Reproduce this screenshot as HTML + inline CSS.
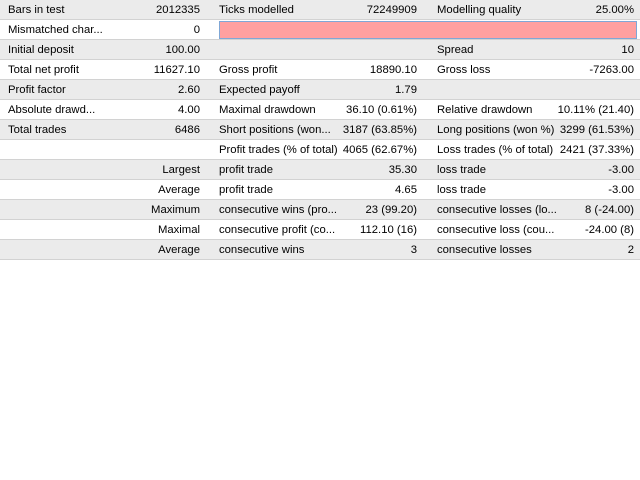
<!DOCTYPE html>
<html><head><style>
body{margin:0;width:640px;height:480px;background:#fff;font-family:"Liberation Sans",sans-serif;font-size:11.3px;color:#000;overflow:hidden;position:relative}
.r{position:absolute;left:0;width:640px;height:19px;border-bottom:1px solid #d2d2d2}
.g{background:#ebebeb}
.r span{position:absolute;top:4px;white-space:nowrap}
.l1{left:8px}.v1{right:440px}.l2{left:219px}.v2{right:223px}.l3{left:437px}.v3{right:6px}
.rl{right:440px}
.pink{position:absolute;left:219px;top:21px;width:416px;height:16px;background:#ffa0a0;border:1px solid #7fa7d6}
</style></head><body>
<div class="r g" style="top:0"><span class="l1">Bars in test</span><span class="v1">2012335</span><span class="l2">Ticks modelled</span><span class="v2">72249909</span><span class="l3">Modelling quality</span><span class="v3">25.00%</span></div>
<div class="r" style="top:20px"><span class="l1">Mismatched char...</span><span class="v1">0</span></div>
<div class="pink"></div>
<div class="r g" style="top:40px"><span class="l1">Initial deposit</span><span class="v1">100.00</span><span class="l3">Spread</span><span class="v3">10</span></div>
<div class="r" style="top:60px"><span class="l1">Total net profit</span><span class="v1">11627.10</span><span class="l2">Gross profit</span><span class="v2">18890.10</span><span class="l3">Gross loss</span><span class="v3">-7263.00</span></div>
<div class="r g" style="top:80px"><span class="l1">Profit factor</span><span class="v1">2.60</span><span class="l2">Expected payoff</span><span class="v2">1.79</span></div>
<div class="r" style="top:100px"><span class="l1">Absolute drawd...</span><span class="v1">4.00</span><span class="l2">Maximal drawdown</span><span class="v2">36.10 (0.61%)</span><span class="l3">Relative drawdown</span><span class="v3">10.11% (21.40)</span></div>
<div class="r g" style="top:120px"><span class="l1">Total trades</span><span class="v1">6486</span><span class="l2">Short positions (won...</span><span class="v2">3187 (63.85%)</span><span class="l3">Long positions (won %)</span><span class="v3">3299 (61.53%)</span></div>
<div class="r" style="top:140px"><span class="l2">Profit trades (% of total)</span><span class="v2">4065 (62.67%)</span><span class="l3">Loss trades (% of total)</span><span class="v3">2421 (37.33%)</span></div>
<div class="r g" style="top:160px"><span class="rl">Largest</span><span class="l2">profit trade</span><span class="v2">35.30</span><span class="l3">loss trade</span><span class="v3">-3.00</span></div>
<div class="r" style="top:180px"><span class="rl">Average</span><span class="l2">profit trade</span><span class="v2">4.65</span><span class="l3">loss trade</span><span class="v3">-3.00</span></div>
<div class="r g" style="top:200px"><span class="rl">Maximum</span><span class="l2">consecutive wins (pro...</span><span class="v2">23 (99.20)</span><span class="l3">consecutive losses (lo...</span><span class="v3">8 (-24.00)</span></div>
<div class="r" style="top:220px"><span class="rl">Maximal</span><span class="l2">consecutive profit (co...</span><span class="v2">112.10 (16)</span><span class="l3">consecutive loss (cou...</span><span class="v3">-24.00 (8)</span></div>
<div class="r g" style="top:240px"><span class="rl">Average</span><span class="l2">consecutive wins</span><span class="v2">3</span><span class="l3">consecutive losses</span><span class="v3">2</span></div>
</body></html>
